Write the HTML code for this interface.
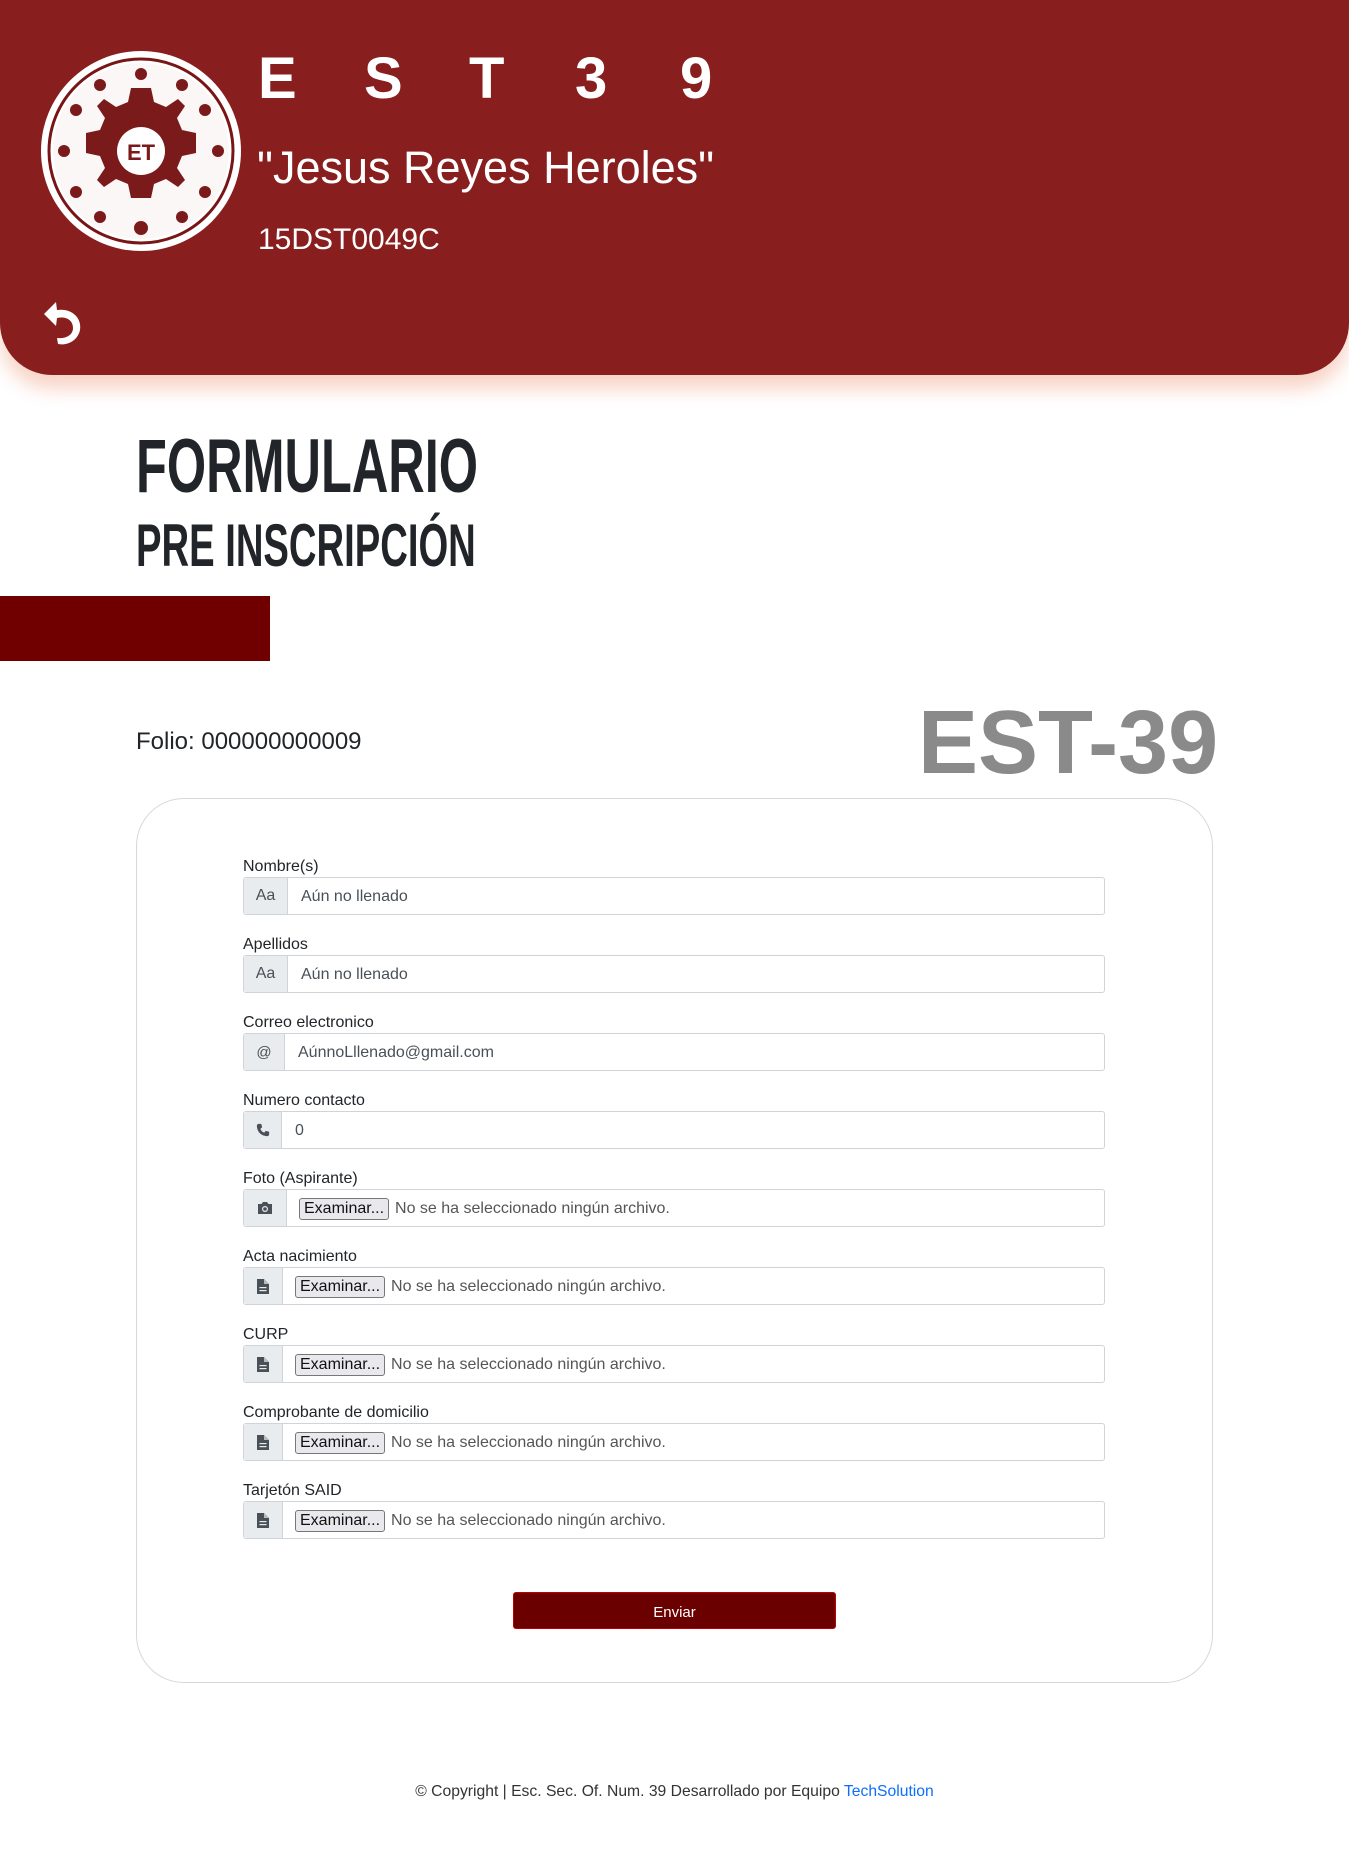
<!DOCTYPE html>
<html><head><meta charset="utf-8"><style>
*{box-sizing:border-box;margin:0;padding:0}
body{width:1349px;height:1871px;background:#fff;font-family:"Liberation Sans",Arial,sans-serif;position:relative;overflow:hidden}
.hdr{position:absolute;left:0;top:0;width:1349px;height:375px;background:#881e1e;border-radius:0 0 52px 52px;box-shadow:0 14px 18px rgba(240,160,130,.45)}
.ab{position:absolute}
.L{position:absolute;top:45px;color:#fff;font-weight:bold;font-size:58px}
.lbl{position:absolute;left:243px;font-size:16px;color:#212529;line-height:20px}
.inp{position:absolute;left:243px;width:862px;height:38px;border:1px solid #ced4da;border-radius:3px;display:flex;background:#fff}
.pre{background:#e9ecef;border-right:1px solid #ced4da;display:flex;align-items:center;justify-content:center;color:#495057;font-size:16px;height:100%}
.val{padding-left:13px;display:flex;align-items:center;color:#495057;font-size:16px;padding-top:2px}
.btn{display:inline-block;border:1px solid #777;background:#e9e9ed;border-radius:3px;font-size:16px;padding:1px 4px;color:#111;margin-left:12px;margin-right:6px}
.fv{display:flex;align-items:center;color:#555;font-size:16px;padding-top:2px}
</style></head><body>
<div class="hdr"></div>
<svg class="ab" style="left:40px;top:50px" width="202" height="202" viewBox="0 0 202 202">
<circle cx="101" cy="101" r="100" fill="#fff"/>
<circle cx="101" cy="101" r="92" fill="none" stroke="#7a1515" stroke-width="3"/>
<circle cx="101" cy="101" r="88" fill="#fbf7f7"/>
<g fill="#7a1a1a">
<path d="M101 38 l10 0 3 14 12 5 12-8 7 7-8 12 5 12 14 3 0 20-14 3-5 12 8 12-7 7-12-8-12 5-3 14-20 0-3-14-12-5-12 8-7-7 8-12-5-12-14-3 0-20 14-3 5-12-8-12 7-7 12 8 12-5 3-14z"/>
</g>
<circle cx="101" cy="101" r="24" fill="#fff"/>
<text x="101" y="110" text-anchor="middle" font-size="22" font-weight="bold" fill="#7a1a1a" font-family="Liberation Sans">ET</text>
<g fill="#7a1a1a"><circle cx="60" cy="35" r="6"/><circle cx="101" cy="24" r="6"/><circle cx="142" cy="35" r="6"/><circle cx="165" cy="60" r="6"/><circle cx="178" cy="101" r="6"/><circle cx="165" cy="142" r="6"/><circle cx="142" cy="167" r="6"/><circle cx="101" cy="178" r="7"/><circle cx="60" cy="167" r="6"/><circle cx="36" cy="142" r="6"/><circle cx="24" cy="101" r="6"/><circle cx="36" cy="60" r="6"/></g>
</svg>
<div class="L" style="left:258px">E</div><div class="L" style="left:364px">S</div><div class="L" style="left:469px">T</div><div class="L" style="left:575px">3</div><div class="L" style="left:680px">9</div>
<div class="ab" style="left:257px;top:142px;color:#fff;font-size:45px">"Jesus Reyes Heroles"</div>
<div class="ab" style="left:258px;top:223px;color:#fff;font-size:30px">15DST0049C</div>
<svg class="ab" style="left:40px;top:300px" width="50" height="48" viewBox="0 0 50 48"><path d="M4 14 L16 2 L17 10 C32 8 42 18 40 30 C38 40 28 46 18 44 L17 38 C26 39 33 35 33 28 C33 20 26 16 17 18 L16 26 Z" fill="#fff"/></svg>
<div class="ab" style="left:136px;top:424px;font-size:76px;font-weight:bold;color:#212529;transform:scaleX(.664);transform-origin:left;line-height:86px">FORMULARIO</div>
<div class="ab" style="left:136px;top:512px;font-size:60px;font-weight:bold;color:#212529;transform:scaleX(.637);transform-origin:left;line-height:68px">PRE INSCRIPCIÓN</div>
<div class="ab" style="left:0;top:596px;width:270px;height:65px;background:#700000"></div>
<div class="ab" style="left:136px;top:728px;font-size:24px;color:#212529">Folio: 000000000009</div>
<div class="ab" style="left:918px;top:692px;font-size:90px;font-weight:bold;color:#8a8a8a;letter-spacing:0px">EST-39</div>
<div class="ab" style="left:136px;top:798px;width:1077px;height:885px;border:1px solid #d8d8d8;border-radius:48px"></div>

<div class="lbl" style="top:857px">Nombre(s)</div>
<div class="inp" style="top:877px"><div class="pre" style="width:44px">Aa</div><div class="val">Aún no llenado</div></div>
<div class="lbl" style="top:935px">Apellidos</div>
<div class="inp" style="top:955px"><div class="pre" style="width:44px">Aa</div><div class="val">Aún no llenado</div></div>
<div class="lbl" style="top:1013px">Correo electronico</div>
<div class="inp" style="top:1033px"><div class="pre" style="width:41px;font-size:15px">@</div><div class="val">AúnnoLllenado@gmail.com</div></div>
<div class="lbl" style="top:1091px">Numero contacto</div>
<div class="inp" style="top:1111px"><div class="pre" style="width:38px"><svg width="14" height="14" viewBox="0 0 16 16"><path d="M3 1 L6 1 L7 5 L5 6.5 C6 9 7 10 9.5 11 L11 9 L15 10 L15 13 C15 14 14 15 13 15 C6 15 1 10 1 3 C1 2 2 1 3 1Z" fill="#495057"/></svg></div><div class="val">0</div></div>
<div class="lbl" style="top:1169px">Foto (Aspirante)</div>
<div class="inp" style="top:1189px"><div class="pre" style="width:43px"><svg width="16" height="14" viewBox="0 0 16 14"><path d="M1 3 H4.5 L6 1 H10 L11.5 3 H15 V13 H1Z" fill="#495057"/><circle cx="8" cy="8" r="3" fill="#e9ecef"/><circle cx="8" cy="8" r="1.8" fill="#495057"/></svg></div><div class="fv"><span class="btn">Examinar...</span>No se ha seleccionado ningún archivo.</div></div>
<div class="lbl" style="top:1247px">Acta nacimiento</div>
<div class="inp" style="top:1267px"><div class="pre" style="width:39px"><svg width="12" height="15" viewBox="0 0 12 15"><path d="M0 0 H7 L12 5 V15 H0Z" fill="#495057"/><path d="M7 0 V5 H12" fill="#bbb"/><rect x="2.5" y="8" width="7" height="1.2" fill="#e9ecef"/><rect x="2.5" y="11" width="7" height="1.2" fill="#e9ecef"/></svg></div><div class="fv"><span class="btn">Examinar...</span>No se ha seleccionado ningún archivo.</div></div>
<div class="lbl" style="top:1325px">CURP</div>
<div class="inp" style="top:1345px"><div class="pre" style="width:39px"><svg width="12" height="15" viewBox="0 0 12 15"><path d="M0 0 H7 L12 5 V15 H0Z" fill="#495057"/><path d="M7 0 V5 H12" fill="#bbb"/><rect x="2.5" y="8" width="7" height="1.2" fill="#e9ecef"/><rect x="2.5" y="11" width="7" height="1.2" fill="#e9ecef"/></svg></div><div class="fv"><span class="btn">Examinar...</span>No se ha seleccionado ningún archivo.</div></div>
<div class="lbl" style="top:1403px">Comprobante de domicilio</div>
<div class="inp" style="top:1423px"><div class="pre" style="width:39px"><svg width="12" height="15" viewBox="0 0 12 15"><path d="M0 0 H7 L12 5 V15 H0Z" fill="#495057"/><path d="M7 0 V5 H12" fill="#bbb"/><rect x="2.5" y="8" width="7" height="1.2" fill="#e9ecef"/><rect x="2.5" y="11" width="7" height="1.2" fill="#e9ecef"/></svg></div><div class="fv"><span class="btn">Examinar...</span>No se ha seleccionado ningún archivo.</div></div>
<div class="lbl" style="top:1481px">Tarjetón SAID</div>
<div class="inp" style="top:1501px"><div class="pre" style="width:39px"><svg width="12" height="15" viewBox="0 0 12 15"><path d="M0 0 H7 L12 5 V15 H0Z" fill="#495057"/><path d="M7 0 V5 H12" fill="#bbb"/><rect x="2.5" y="8" width="7" height="1.2" fill="#e9ecef"/><rect x="2.5" y="11" width="7" height="1.2" fill="#e9ecef"/></svg></div><div class="fv"><span class="btn">Examinar...</span>No se ha seleccionado ningún archivo.</div></div>

<div class="ab" style="left:513px;top:1592px;width:323px;height:37px;background:#6b0000;border:1px solid #b00;border-radius:3px;color:#fff;font-size:15px;display:flex;align-items:center;justify-content:center;padding-top:3px">Enviar</div>
<div class="ab" style="left:0;top:1783px;width:1349px;text-align:center;font-size:15.7px;color:#333">© Copyright | Esc. Sec. Of. Num. 39 Desarrollado por Equipo <span style="color:#0d6efd">TechSolution</span></div>
</body></html>
